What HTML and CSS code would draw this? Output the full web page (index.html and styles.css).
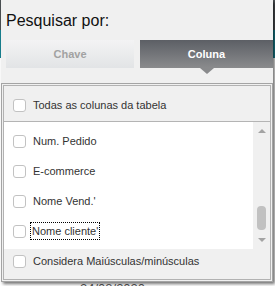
FILE: index.html
```html
<!DOCTYPE html>
<html lang="pt">
<head>
<meta charset="utf-8">
<title>Pesquisar por</title>
<link rel="stylesheet" href="styles.css">
</head>
<body>
<div class="page">
  <div class="bg-date">24/08/2020</div>
  <div class="popup">
    <div class="title">Pesquisar por:</div>
    <div class="tabs">
      <div class="tab tab-off">Chave</div>
      <div class="tab tab-on">Coluna</div>
    </div>
    <div class="box">
      <div class="box-inner">
        <div class="row row-head"><span class="cb"></span><span class="lbl">Todas as colunas da tabela</span></div>
        <div class="list">
          <div class="items">
            <div class="item"><span class="cb"></span><span class="lbl">Num. Pedido</span></div>
            <div class="item"><span class="cb"></span><span class="lbl">E-commerce</span></div>
            <div class="item"><span class="cb"></span><span class="lbl">Nome Vend.'</span></div>
            <div class="item"><span class="cb"></span><span class="lbl focus">Nome cliente'</span></div>
          </div>
          <div class="scrollbar">
            <span class="arrow up"></span>
            <span class="track"><span class="thumb"></span></span>
            <span class="arrow down"></span>
          </div>
        </div>
        <div class="row row-foot"><span class="cb"></span><span class="lbl">Considera Maiúsculas/minúsculas</span></div>
      </div>
    </div>
  </div>
</div>
</body>
</html>
```
FILE: styles.css
```css
html, body {
  margin: 0;
  padding: 0;
}
body {
  font-family: "Liberation Sans", Arial, sans-serif;
  background: #ffffff;
}
.page {
  position: relative;
  width: 275px;
  height: 286px;
  overflow: hidden;
  background: linear-gradient(to bottom, #4b5053 0, #4b5053 30px, #17808f 30px, #17808f 58px, #ffffff 58px);
}
.bg-date {
  position: absolute;
  left: 80px;
  top: 281px;
  font-size: 13px;
  line-height: 15px;
  color: #555;
}
.popup {
  position: absolute;
  left: 1px;
  top: 0;
  width: 272px;
  height: 282px;
  background: #f0f0f0;
  box-shadow: 2px 2px 3px rgba(0, 0, 0, 0.55);
  display: flex;
  flex-direction: column;
}
.title {
  padding: 12px 0 0 5px;
  font-size: 16px;
  line-height: 18px;
  color: #111;
}
.tabs {
  display: flex;
  gap: 6px;
  margin: 10px 0 0 5px;
  height: 28px;
}
.tab {
  height: 28px;
  line-height: 28px;
  text-align: center;
  font-size: 11px;
  font-weight: bold;
}
.tab-off {
  width: 128px;
  color: #a2a2a2;
  background: linear-gradient(to bottom, #f3f3f4, #e2e4e6);
}
.tab-on {
  flex: 1;
  position: relative;
  color: #ffffff;
  background: linear-gradient(to bottom, #5c5f65, #8a8b8d);
}
.tab-on::after {
  content: "";
  position: absolute;
  left: 50%;
  top: 100%;
  margin-left: -7px;
  border-left: 7px solid transparent;
  border-right: 7px solid transparent;
  border-top: 6px solid #898a8c;
}
.box {
  margin-top: 15px;
  flex: 1;
  border: 1px solid #a4a4a4;
  padding: 1px;
  display: flex;
}
.box-inner {
  flex: 1;
  border: 1px solid #b2b2b2;
  display: flex;
  flex-direction: column;
}
.row {
  display: flex;
  align-items: center;
  padding-left: 9px;
  font-size: 11px;
  color: #333;
  box-sizing: border-box;
}
.row-head {
  height: 36px;
  padding-top: 3px;
  border-bottom: 1px solid #b4b4b4;
}
.row-foot {
  flex: 1;
  padding-bottom: 6px;
}
.cb {
  width: 11px;
  height: 11px;
  border: 1px solid #c2c2c2;
  border-radius: 3px;
  background: #ffffff;
  flex: none;
}
.lbl {
  margin-left: 7px;
}
.list {
  height: 127px;
  display: flex;
  background: #ffffff;
}
.items {
  flex: 1;
  padding-top: 4px;
}
.item {
  height: 30px;
  display: flex;
  align-items: center;
  padding-left: 9px;
  font-size: 11px;
  color: #333;
}
.item .lbl {
  margin-left: 7px;
}
.item .lbl.focus {
  margin-left: 5px;
  padding: 2px 1px;
  outline: 1px dotted #000;
}
.scrollbar {
  width: 17px;
  background: #f0f0f0;
  display: flex;
  flex-direction: column;
  align-items: center;
  padding: 7px 0;
  box-sizing: border-box;
}
.arrow {
  width: 0;
  height: 0;
  border-left: 4px solid transparent;
  border-right: 4px solid transparent;
}
.arrow.up {
  border-bottom: 4px solid #a3a3a3;
}
.arrow.down {
  border-top: 4px solid #a3a3a3;
}
.track {
  flex: 1;
  display: flex;
  flex-direction: column;
  align-items: center;
}
.thumb {
  margin-top: auto;
  margin-bottom: 8px;
  width: 9px;
  height: 24px;
  border-radius: 4px;
  background: #c1c1c1;
}
```
